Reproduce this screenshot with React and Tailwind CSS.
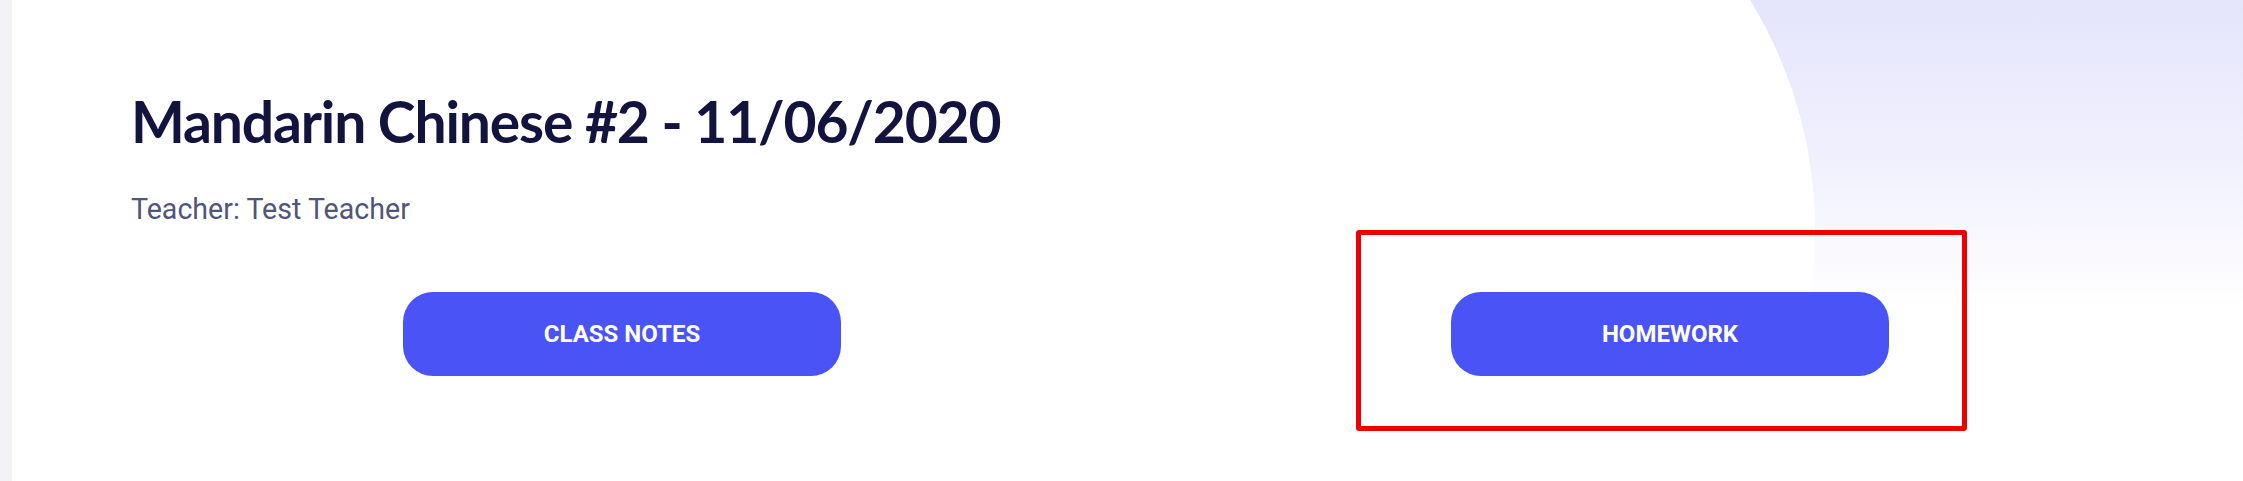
import React from "react";

export default function App() {
  return (
    <div className="relative w-[2243px] h-[481px] bg-white overflow-hidden flex">
      <div className="w-[12px] shrink-0 bg-[#f3f3f7]" />
      <svg
        className="absolute left-0 top-0"
        width="2243"
        height="481"
        viewBox="0 0 2243 481"
      >
        <defs>
          <linearGradient id="blob" x1="0" y1="0" x2="0" y2="310" gradientUnits="userSpaceOnUse">
            <stop offset="0" stopColor="#e4e5fc" />
            <stop offset="0.5" stopColor="#f0f0fd" />
            <stop offset="1" stopColor="#ffffff" />
          </linearGradient>
        </defs>
        <path
          d="M1750 0 A439 439 0 0 1 1815 230 A439 439 0 0 1 1750 460 L2243 460 L2243 0 Z"
          fill="url(#blob)"
        />
      </svg>
      <div className="relative flex-1 pl-[119px] pt-[87px]">
        <h1 className="font-['Lato','Open_Sans',sans-serif] font-bold text-[57px] leading-[68px] tracking-[-1.15px] text-[#13133f]">
          Mandarin Chinese #2 - 11/06/2020
        </h1>
        <p className="mt-[37px] font-['Roboto',sans-serif] text-[28.6px] leading-[34px] text-[#50557a]">
          Teacher: Test Teacher
        </p>
        <div className="mt-[66px] flex gap-[610px] pl-[272px]">
          <button className="w-[438px] h-[84px] rounded-[30px] bg-[#4a53f5] text-white font-['Roboto',sans-serif] font-bold text-[24px] uppercase">
            Class Notes
          </button>
          <button className="w-[438px] h-[84px] rounded-[30px] bg-[#4a53f5] text-white font-['Roboto',sans-serif] font-bold text-[24px] uppercase">
            Homework
          </button>
        </div>
      </div>
      <div className="absolute left-[1356px] top-[230px] w-[611px] h-[201px] border-[5px] border-[#ee0000] rounded-[3px]" />
    </div>
  );
}
